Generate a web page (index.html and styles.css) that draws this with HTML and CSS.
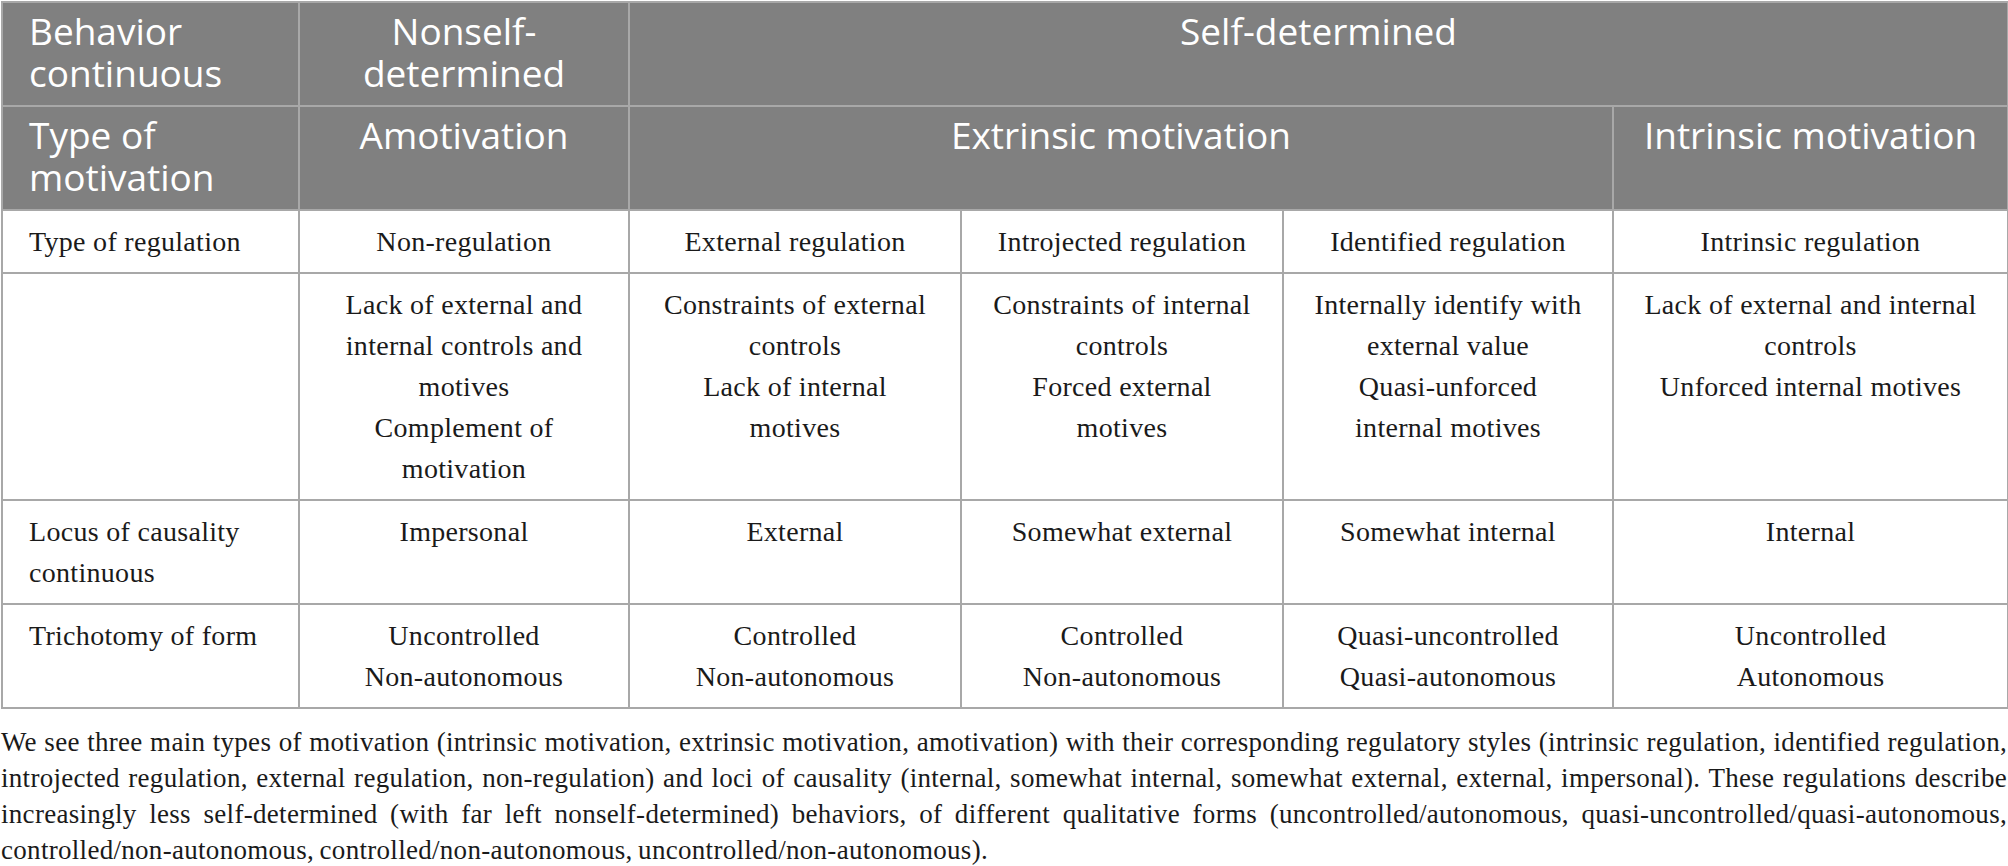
FILE: index.html
```html
<!DOCTYPE html>
<html>
<head>
    <meta http-equiv="Content-Type" content="text/html; charset=utf-8" />
    <title>Motivation continuum</title>
    <link rel="stylesheet" href="styles.css">
</head>
<body>

<div class="tbl-wrap">
    <table class="mot-table">
        <colgroup>
            <col class="c1">
            <col class="c2">
            <col class="c3">
            <col class="c4">
            <col class="c5">
            <col class="c6">
        </colgroup>
        <thead>
            <tr>
                <th class="first">Behavior<br>continuous</th>
                <th>Nonself-<br>determined</th>
                <th colspan="4">Self-determined</th>
            </tr>
            <tr>
                <th class="first">Type of<br>motivation</th>
                <th>Amotivation</th>
                <th colspan="3">Extrinsic motivation</th>
                <th>Intrinsic motivation</th>
            </tr>
        </thead>
        <tbody>
            <tr>
                <td class="first">Type of regulation</td>
                <td>Non-regulation</td>
                <td>External regulation</td>
                <td>Introjected regulation</td>
                <td>Identified regulation</td>
                <td>Intrinsic regulation</td>
            </tr>
            <tr>
                <td class="first"></td>
                <td>Lack of external and<br>internal controls and<br>motives<br>Complement of<br>motivation</td>
                <td>Constraints of external<br>controls<br>Lack of internal<br>motives</td>
                <td>Constraints of internal<br>controls<br>Forced external<br>motives</td>
                <td>Internally identify with<br>external value<br>Quasi-unforced<br>internal motives</td>
                <td>Lack of external and internal<br>controls<br>Unforced internal motives</td>
            </tr>
            <tr>
                <td class="first">Locus of causality<br>continuous</td>
                <td>Impersonal</td>
                <td>External</td>
                <td>Somewhat external</td>
                <td>Somewhat internal</td>
                <td>Internal</td>
            </tr>
            <tr>
                <td class="first">Trichotomy of form</td>
                <td>Uncontrolled<br>Non-autonomous</td>
                <td>Controlled<br>Non-autonomous</td>
                <td>Controlled<br>Non-autonomous</td>
                <td>Quasi-uncontrolled<br>Quasi-autonomous</td>
                <td>Uncontrolled<br>Autonomous</td>
            </tr>
        </tbody>
    </table>

    <p class="tbl-note">We see three main types of motivation (intrinsic motivation, extrinsic motivation, amotivation) with their corresponding regulatory styles (intrinsic regulation, identified regulation, introjected regulation, external regulation, non-regulation) and loci of causality (internal, somewhat internal, somewhat external, external, impersonal). These regulations describe increasingly less self-determined (with far left nonself-determined) behaviors, of different qualitative forms (uncontrolled/autonomous, quasi-uncontrolled/quasi-autonomous, controlled/non-autonomous, controlled/non-autonomous, uncontrolled/non-autonomous).</p>
</div>

</body>
</html>
```

FILE: styles.css
```css
body{
    margin: 0px;padding: 0px;
    background: #fff;color: #1a1a1a;
    font-family: "Liberation Serif", "Times New Roman", serif;
}

.tbl-wrap{
    width: 2006px;
    padding: 1px 0 0 1px;
}

/*table*/
.mot-table{
    width: 2006px;
    table-layout: fixed;
    border-collapse: collapse;
    border: 2px solid #a8a8a8;
}

.c1{width: 297px;}
.c2{width: 330px;}
.c3{width: 332px;}
.c4{width: 322px;}
.c5{width: 330px;}
.c6{width: 395px;}

.mot-table th,
.mot-table td{
    border: 2px solid #a8a8a8;
    vertical-align: top;
    text-align: center;
}

/*header rows*/
.mot-table th{
    background: #808080;color: #fff;
    font-family: "Open Sans", "Liberation Sans", sans-serif;
    font-weight: normal;
    font-size: 37px;line-height: 42px;
    padding: 7px 6px 11px 6px;
}

/*body rows*/
.mot-table td{
    font-size: 28px;line-height: 41px;
    letter-spacing: 0.3px;
    padding: 10px 4px 10px 4px;
}

.mot-table .first{
    text-align: left;
    padding-left: 26px;
}

/*note under the table*/
.tbl-note{
    margin: 15px 0 0 0;
    font-size: 27px;line-height: 36px;
    letter-spacing: 0.3px;word-spacing: -1.5px;
    text-align: justify;
}
```
